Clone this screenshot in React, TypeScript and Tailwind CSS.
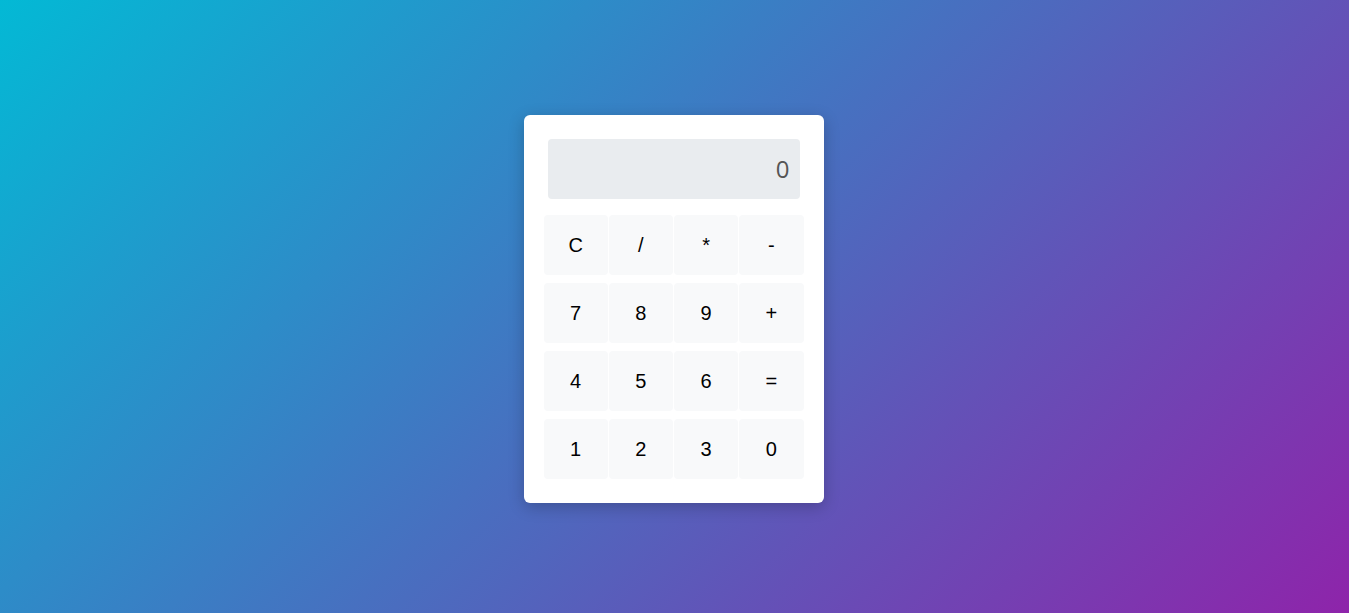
import React, { useState } from 'react';

const keys = ['C', '/', '*', '-', '7', '8', '9', '+', '4', '5', '6', '=', '1', '2', '3', '0'];

export default function App() {
  const [display, setDisplay] = useState('0');

  const press = (k: string) => {
    if (k === 'C') return setDisplay('0');
    if (k === '=') {
      try {
        // eslint-disable-next-line no-new-func
        setDisplay(String(Function(`return (${display})`)()));
      } catch {
        setDisplay('Error');
      }
      return;
    }
    setDisplay((d) => (d === '0' || d === 'Error' ? k : d + k));
  };

  return (
    <div className="min-h-screen w-full flex items-center justify-center pt-[5px] pr-[2px] bg-[linear-gradient(135deg,#03b9d5,#8e24aa)] font-['Liberation_Sans',Arial,sans-serif]">
      <div className="w-[300px] bg-white rounded-md shadow-[0_4px_16px_rgba(0,0,0,0.22)] px-5 pt-6 pb-6">
        <div className="mx-1 h-[60px] rounded bg-[#e9ecef] flex items-center justify-end px-2.5 text-[24px] text-[#555] font-['Open_Sans',sans-serif]">
          {display}
        </div>
        <div className="mt-4 grid grid-cols-4 gap-x-px gap-y-2">
          {keys.map((k) => (
            <button
              key={k}
              onClick={() => press(k)}
              className="h-[60px] rounded bg-[#f8f9fa] text-[20px] text-black cursor-pointer hover:bg-[#e2e6ea]"
            >
              {k}
            </button>
          ))}
        </div>
      </div>
    </div>
  );
}
